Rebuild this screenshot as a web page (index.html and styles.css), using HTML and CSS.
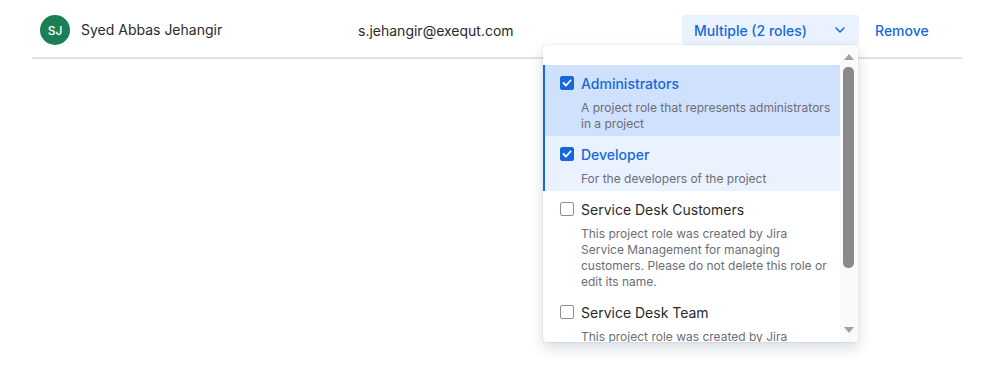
FILE: index.html
```html
<!DOCTYPE html>
<html lang="en">
<head>
  <meta charset="UTF-8" />
  <meta name="viewport" content="width=device-width, initial-scale=1.0"/>
  <title>Project roles</title>
  <link rel="stylesheet" href="styles.css">
</head>
<body>

<div class="members">
  <div class="member-row">
    <div class="user">
      <span class="avatar">SJ</span>
      <span class="name">Syed Abbas Jehangir</span>
    </div>
    <div class="email">s.jehangir@exequt.com</div>
    <div class="role">
      <button class="role-select">
        <span>Multiple (2 roles)</span>
        <svg width="10" height="6" viewBox="0 0 10 6"><path d="M1 1l4 4 4-4" fill="none" stroke="currentColor" stroke-width="1.5" stroke-linecap="round" stroke-linejoin="round"/></svg>
      </button>

      <!-- open role menu -->
      <div class="menu">
        <ul class="options">
          <li class="option checked current">
            <span class="box"><svg width="10" height="8" viewBox="0 0 10 8"><path d="M1.5 4l2.5 2.5 4.5-5" fill="none" stroke="#fff" stroke-width="1.8" stroke-linecap="round" stroke-linejoin="round"/></svg></span>
            <div class="option-text">
              <div class="title">Administrators</div>
              <div class="desc">A project role that represents administrators<br>in a project</div>
            </div>
          </li>
          <li class="option checked">
            <span class="box"><svg width="10" height="8" viewBox="0 0 10 8"><path d="M1.5 4l2.5 2.5 4.5-5" fill="none" stroke="#fff" stroke-width="1.8" stroke-linecap="round" stroke-linejoin="round"/></svg></span>
            <div class="option-text">
              <div class="title">Developer</div>
              <div class="desc">For the developers of the project</div>
            </div>
          </li>
          <li class="option">
            <span class="box"></span>
            <div class="option-text">
              <div class="title">Service Desk Customers</div>
              <div class="desc">This project role was created by Jira<br>Service Management for managing<br>customers. Please do not delete this role or<br>edit its name.</div>
            </div>
          </li>
          <li class="option">
            <span class="box"></span>
            <div class="option-text">
              <div class="title">Service Desk Team</div>
              <div class="desc">This project role was created by Jira<br>Service Management for managing<br>agents.</div>
            </div>
          </li>
        </ul>
        <div class="scrollbar">
          <span class="arrow up"></span>
          <span class="thumb"></span>
          <span class="arrow down"></span>
        </div>
      </div>
    </div>
    <a class="remove" href="#">Remove</a>
  </div>
</div>

</body>
</html>
```

FILE: styles.css
```css
html,
body {
  min-height: 368px;
}

body {
  font-family: Inter, "Noto Sans", sans-serif;
  margin: 0;
  background: #ffffff;
  color: #292a2e;
  font-size: 14px;
}

.members {
  margin-left: 32px;
  width: 930px;
  min-height: 368px;
}

.member-row {
  display: grid;
  grid-template-columns: 318px 324px 193px 1fr;
  align-items: center;
  padding: 15px 0 12px 8px;
  border-bottom: 2px solid #dfe1e4;
}

.user {
  display: flex;
  align-items: center;
  gap: 11px;
}

.avatar {
  width: 30px;
  height: 30px;
  border-radius: 50%;
  background: #1a7f55;
  color: #fff;
  font-size: 12px;
  font-weight: 500;
  display: flex;
  align-items: center;
  justify-content: center;
}

.name {
  margin-top: -2px;
}

.role {
  position: relative;
}

.role-select {
  width: 177px;
  height: 30px;
  display: flex;
  align-items: center;
  justify-content: space-between;
  padding: 0 14px 0 12px;
  border: none;
  border-radius: 3px;
  background: #e9f2fe;
  color: #1868db;
  font-family: inherit;
  font-size: 14px;
  font-weight: 500;
}

.remove {
  color: #1868db;
  text-decoration: none;
  font-weight: 500;
}

/* dropdown */
.menu {
  position: absolute;
  z-index: 10;
  top: 30px;
  left: -139px;
  width: 315px;
  height: 297px;
  display: flex;
  background: #fff;
  border-radius: 3px;
  box-shadow: 0 0 1px rgba(9, 30, 66, 0.35), 0 6px 14px rgba(9, 30, 66, 0.16);
  overflow: hidden;
}

.options {
  list-style: none;
  margin: 0;
  padding: 20px 0 0;
  width: 297px;
  overflow: hidden;
}

.option {
  display: flex;
  align-items: flex-start;
  gap: 7px;
  padding: 9px 4px 4px 15px;
  border-left: 2px solid transparent;
}

.option.checked {
  background: #e9f2fe;
  border-left-color: #1868db;
}

.option.current {
  background: #cfe1fd;
}

.box {
  flex: none;
  width: 14px;
  height: 14px;
  margin-top: 2px;
  box-sizing: border-box;
  border: 1.5px solid #8c8f97;
  border-radius: 2px;
  display: flex;
  align-items: center;
  justify-content: center;
}

.option.checked .box {
  background: #1868db;
  border-color: #1868db;
}

.option-text {
  width: 255px;
  white-space: nowrap;
}

.title {
  font-size: 14px;
  line-height: 20px;
}

.option.checked .title {
  color: #1868db;
  font-weight: 500;
}

.desc {
  margin-top: 6px;
  font-size: 12px;
  line-height: 16px;
  color: #6b6e76;
}

.scrollbar {
  width: 17px;
  background: #fafafa;
  display: flex;
  flex-direction: column;
  align-items: center;
  padding-top: 9px;
}

.arrow {
  width: 0;
  height: 0;
  border-left: 5px solid transparent;
  border-right: 5px solid transparent;
}

.arrow.up {
  border-bottom: 6px solid #a0a0a0;
}

.arrow.down {
  border-top: 6px solid #a0a0a0;
}

.thumb {
  width: 11px;
  height: 201px;
  margin: 7px 0 59px;
  border-radius: 5px;
  background: #8a8a8a;
}
```
